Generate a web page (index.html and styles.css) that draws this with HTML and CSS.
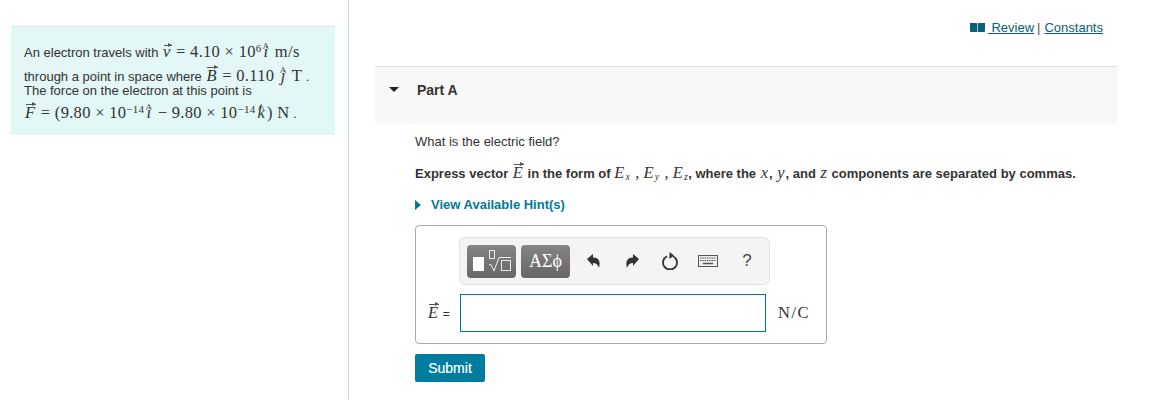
FILE: index.html
```html
<!DOCTYPE html>
<html lang="en">
<head>
  <meta charset="UTF-8">
  <title>Part A</title>
  <link rel="stylesheet" href="styles.css">
</head>
<body>
  <div class="page">
    <aside class="left">
      <div class="problem">
        <div class="line line1">An electron travels with <span class="math"><span class="vec low"><i>v</i></span> = 4.10 × 10<sup>6</sup><span class="hat"><i>i</i></span> m/s</span></div>
        <div class="line line2">through a point in space where <span class="math"><span class="vec"><i>B</i></span> = 0.110 <span class="hat"><i>j</i></span> T</span> .</div>
        <div class="line line3">The force on the electron at this point is</div>
        <div class="line line4"><span class="math"><span class="vec"><i>F</i></span> = (9.80 × 10<sup>−14</sup><span class="hat"><i>i</i></span> − 9.80 × 10<sup>−14</sup><span class="hat"><i>k</i></span>) N</span> .</div>
      </div>
    </aside>

    <main class="right">
      <div class="top-links">
        <svg class="book" width="15" height="9" viewBox="0 0 15 9"><path d="M0 0h6.500q.7 0 .7 1v8H1q-1 0-1-1zM15 0H8.500q-.7 0-.7 1v8H14q1 0 1-1z" fill="#0b6079"/></svg>
        <a href="#">&nbsp;Review</a> <span class="sep">|</span> <a href="#">Constants</a>
      </div>

      <div class="part-head">
        <span class="arrow-down"></span>
        <h2>Part A</h2>
      </div>

      <div class="part-body">
        <p class="question">What is the electric field?</p>
        <p class="instruct">Express vector <span class="math big"><span class="vec"><i>E</i></span></span> in the form of <span class="math big comp"><i>E<sub>x</sub></i> , <i>E<sub>y</sub></i> , <i>E<sub>z</sub></i></span>, where the <span class="math big var"><i>x</i></span>, <span class="math big var"><i>y</i></span>, and <span class="math big var"><i>z</i></span> components are separated by commas.</p>
        <p class="hints"><span class="arrow-right"></span>View Available Hint(s)</p>

        <div class="answer">
          <div class="toolbar">
            <div class="tool-btn">
              <svg width="38" height="27" viewBox="0 0 38 27">
                <rect x="0" y="9" width="11" height="14" fill="#fff"/>
                <rect x="16.500" y="2.500" width="5" height="8" fill="none" stroke="#e8e8e8"/>
                <path d="M16 17l2-.5 3 6.500 5-13.500h12" fill="none" stroke="#f0f0f0"/>
                <rect x="28.500" y="12.500" width="9" height="10" fill="none" stroke="#e8e8e8"/>
              </svg>
            </div>
            <div class="tool-btn greek">ΑΣϕ</div>
            <svg class="tool undo" width="16" height="16" viewBox="0 0 16 16"><path d="M1 6 7 1v3.500c5 0 8 3 6 10.500-1-3.500-3-5-6-5V13z" fill="#333"/></svg>
            <svg class="tool redo" width="16" height="16" viewBox="0 0 16 16"><path d="M15 6 9 1v3.500c-5 0-8 3-6 10.500 1-3.500 3-5 6-5V13z" fill="#333"/></svg>
            <svg class="tool reload" width="18" height="18" viewBox="0 0 18 18"><path d="M6 4.200a7 7 0 1 0 6 0" fill="none" stroke="#333" stroke-width="1.800"/><path d="M8.500 0v7l4.500-3.500z" fill="#333"/></svg>
            <svg class="tool keys" width="20" height="12" viewBox="0 0 20 12"><rect x=".5" y=".5" width="19" height="11" fill="#eee" stroke="#555"/><path d="M2 3h16M2 5.500h16" stroke="#555" stroke-dasharray="1.500 .8"/><path d="M5 8.500h10" stroke="#555" stroke-width="1.500"/></svg>
            <span class="tool help">?</span>
          </div>
          <div class="input-row">
            <label class="input-label"><span class="math big"><span class="vec"><i>E</i></span></span> <span class="eq">=</span></label>
            <input class="answer-input" type="text">
            <span class="unit">N/C</span>
          </div>
        </div>

        <button class="submit" type="button">Submit</button>
      </div>
    </main>
  </div>
</body>
</html>
```

FILE: styles.css
```css
* { box-sizing: border-box; margin: 0; padding: 0; }

body {
  font-family: "Liberation Sans", Arial, sans-serif;
  font-size: 13px;
  color: #333;
  background: white;
}

.page {
  display: flex;
  height: 400px;
  overflow: hidden;
}

/* left column */
.left {
  width: 349px;
  flex-shrink: 0;
  padding: 26px 13px 0 11px;
  border-right: 1px solid #c3d3e6;
}

.problem {
  background: #e2f7f6;
  border-top: 1px solid #d9e7e7;
  padding: 15px 13px 12px;
}

.line { white-space: nowrap; }
.line1 { height: 20px; line-height: 20px; }
.line2 { height: 16px; line-height: 16px; margin-top: 6px; }
.line3 { height: 14px; line-height: 14px; }
.line4 { height: 20px; line-height: 20px; margin-top: 5px; }

/* math */
.math {
  font-family: "Liberation Serif", "Times New Roman", serif;
  font-size: 16.500px;
  letter-spacing: 0.3px;
  color: #333;
}

.math.big {
  font-size: 16.500px;
  font-weight: normal;
  letter-spacing: 0;
}

.math.comp i { letter-spacing: 1.200px; }
.math.comp { margin-right: -1px; }
.math.var { margin: 0 1px; }

.math sup { font-size: 11px; line-height: 0; vertical-align: 5px; }
.math sub { font-size: 10px; line-height: 0; vertical-align: -2px; }

.vec, .hat {
  position: relative;
  display: inline-block;
  line-height: 1;
}

.vec i { padding: 0 1px; }

.vec::before {
  content: "";
  position: absolute;
  top: -1px;
  left: 2px;
  right: 0;
  height: 1px;
  background: #555;
}

.vec::after {
  content: "";
  position: absolute;
  top: -3px;
  right: 0;
  border-left: 4px solid #555;
  border-top: 2.500px solid transparent;
  border-bottom: 2.500px solid transparent;
}

.vec.low::before { top: 1px; }
.vec.low::after { top: -1px; }

.hat { padding: 0 2px; }

.hat::before {
  content: "^";
  position: absolute;
  top: -4px;
  left: 0;
  right: 0;
  text-align: center;
  font-size: 13px;
}

/* right column */
.right {
  flex: 1;
  padding-left: 26px;
  padding-right: 54px;
}

.top-links {
  display: flex;
  justify-content: flex-end;
  align-items: center;
  gap: 3px;
  height: 66px;
  padding: 0 14px 12px 0;
  color: #555;
}

.top-links a {
  color: #0b6079;
  text-decoration: underline;
}

.sep { margin-right: 1px; }

.part-head {
  display: flex;
  height: 58px;
  padding: 14px 0 0 14px;
  background: #f8f8f8;
  border-top: 1px solid #e0e0e0;
}

.part-head h2 {
  font-size: 14px;
  line-height: 18px;
  margin-left: 18px;
  color: #333;
}

.arrow-down {
  width: 0;
  height: 0;
  margin-top: 6px;
  border-top: 5px solid #222;
  border-left: 5px solid transparent;
  border-right: 5px solid transparent;
}

.part-body { padding: 9px 0 0 40px; }

.question { line-height: 18px; }

.instruct {
  margin-top: 13px;
  line-height: 18px;
  font-weight: bold;
  white-space: nowrap;
}

.hints {
  margin-top: 13px;
  line-height: 18px;
  font-weight: bold;
  color: #007a9c;
  display: flex;
  align-items: center;
}

.arrow-right {
  width: 0;
  height: 0;
  margin-right: 10px;
  border-left: 6px solid #007a9c;
  border-top: 5px solid transparent;
  border-bottom: 5px solid transparent;
}

/* answer box */
.answer {
  width: 412px;
  height: 119px;
  margin-top: 11px;
  padding: 11px 0 0 43px;
  border: 1px solid #aaa;
  border-radius: 4px;
}

.toolbar {
  display: flex;
  align-items: center;
  width: 311px;
  height: 48px;
  padding-left: 7px;
  background: #f4f4f4;
  border: 1px solid #e2e2e2;
  border-radius: 6px;
}

.tool-btn {
  width: 49px;
  height: 33px;
  margin-right: 5px;
  display: flex;
  align-items: center;
  justify-content: center;
  color: white;
  background: linear-gradient(#858585, #666);
  border-radius: 4px;
}

.greek {
  font-family: "Liberation Serif", serif;
  font-size: 18px;
}

.tool { flex-shrink: 0; }
.undo { margin-left: 11px; }
.redo { margin-left: 22px; }
.reload { margin-left: 21px; }
.keys { margin-left: 19px; }

.help {
  width: 16px;
  margin-left: 21px;
  text-align: center;
  font-size: 17px;
  color: #444;
}

.input-row {
  display: flex;
  align-items: center;
  margin-top: 9px;
  margin-left: -43px;
}

.input-label {
  width: 44px;
  padding-left: 11px;
  white-space: nowrap;
}

.eq { font-size: 12px; }

.answer-input {
  width: 306px;
  height: 38px;
  border: 1px solid #007a9c;
  background: white;
}

.unit {
  margin-left: 12px;
  font-family: "Liberation Serif", serif;
  font-size: 16.500px;
  letter-spacing: 1.500px;
}

.submit {
  display: block;
  width: 70px;
  height: 28px;
  margin-top: 10px;
  color: white;
  background: #007c9e;
  border: none;
  border-radius: 2px;
  font-family: "Liberation Sans", Arial, sans-serif;
  font-size: 14px;
  font-weight: normal;
  -webkit-text-stroke: 0.2px white;
}
```
